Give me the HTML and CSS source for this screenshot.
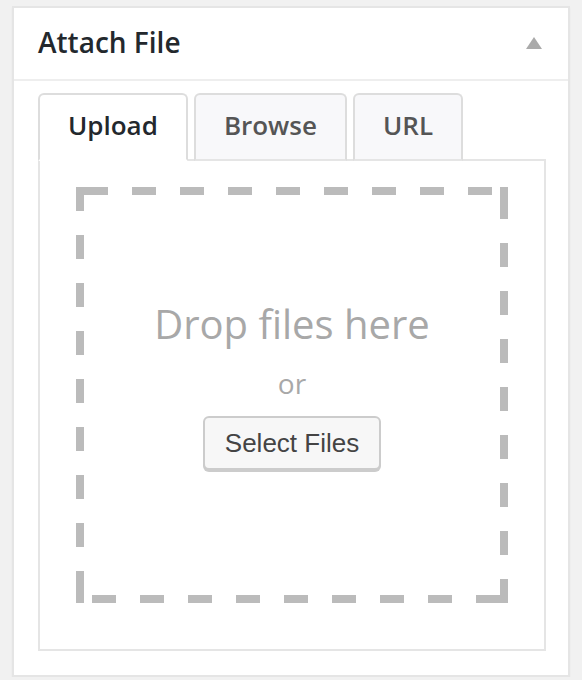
FILE: index.html
```html
<!DOCTYPE html>
<html lang="en">
<head>
  <meta charset="UTF-8">
  <meta name="viewport" content="width=device-width, initial-scale=1.0">
  <title>Attach File</title>
  <link rel="stylesheet" href="styles.css">
</head>
<body>
  <div class="postbox">
    <div class="postbox-header">
      <h2>Attach File</h2>
      <button class="toggle" aria-label="Toggle panel">
        <svg width="16" height="12" viewBox="0 0 16 12"><polygon points="8,0 16,12 0,12" fill="#aaa"/></svg>
      </button>
    </div>

    <div class="inside">
      <div class="tabs">
        <a class="tab active" href="#">Upload</a>
        <a class="tab" href="#">Browse</a>
        <a class="tab" href="#">URL</a>
      </div>

      <div class="tab-panel">
        <div class="drop-area">
          <p class="drop-info">Drop files here</p>
          <p class="drop-or">or</p>
          <button class="select-btn">Select Files</button>
        </div>
      </div>
    </div>
  </div>
</body>
</html>
```

FILE: styles.css
```css
body {
  margin: 0;
  padding: 6px 0 0 12px;
  background-color: #f1f1f1;
  font-family: 'Open Sans', sans-serif;
}
.postbox {
  width: 558px;
  box-sizing: border-box;
  background-color: #fff;
  border: 2px solid #e5e5e5;
  box-shadow: 0 2px 2px rgba(0,0,0,0.04);
}
.postbox-header {
  display: flex;
  align-items: center;
  justify-content: space-between;
  padding: 15px 26px 17px 24px;
  border-bottom: 2px solid #eee;
}
.postbox-header h2 {
  margin: 0;
  font-size: 28px;
  font-weight: 600;
  line-height: 39px;
  color: #23282d;
}
.toggle {
  display: flex;
  padding: 0;
  border: none;
  background: none;
  cursor: pointer;
}
.inside {
  padding: 12px 22px 24px 24px;
}
.tabs {
  display: flex;
  gap: 6px;
  margin-bottom: -2px;
}
.tab {
  position: relative;
  padding: 12px 28px 16px;
  border: 2px solid #ddd;
  border-bottom: 2px solid #e5e5e5;
  border-radius: 6px 6px 0 0;
  background-color: #f8f8fa;
  font-size: 26px;
  font-weight: 600;
  line-height: 36px;
  color: #555;
  text-decoration: none;
}
.tab.active {
  background-color: #fff;
  border-bottom-color: #fff;
  color: #23282d;
}
.tab-panel {
  border: 2px solid #e5e5e5;
  padding: 26px 36px 46px;
}
/* dashed frame: 8px thick, 24px dashes with 24px gaps, L-shaped corners */
.drop-area {
  height: 416px;
  box-sizing: border-box;
  padding-top: 113px;
  text-align: center;
  background:
    linear-gradient(#bbb, #bbb) right top / 8px 8px no-repeat,
    linear-gradient(#bbb, #bbb) left bottom / 8px 8px no-repeat,
    repeating-linear-gradient(90deg, transparent 0 8px, #bbb 8px 32px, transparent 32px 48px) left top / 100% 8px no-repeat,
    repeating-linear-gradient(90deg, transparent 0 16px, #bbb 16px 40px, transparent 40px 48px) left bottom / 100% 8px no-repeat,
    repeating-linear-gradient(180deg, #bbb 0 24px, transparent 24px 48px) left top / 8px 100% no-repeat,
    repeating-linear-gradient(180deg, transparent 0 8px, #bbb 8px 32px, transparent 32px 48px) right top / 8px 100% no-repeat;
}
.drop-info {
  margin: 0;
  font-size: 40px;
  line-height: 48px;
  color: #a8a8a8;
}
.drop-or {
  margin: 18px 0 0;
  font-size: 28px;
  line-height: 34px;
  color: #a8a8a8;
}
.select-btn {
  margin-top: 16px;
  height: 54px;
  padding: 0 20px;
  border: 2px solid #ccc;
  border-radius: 6px;
  background-color: #f7f7f7;
  box-shadow: 0 2px 0 #ccc;
  font-family: 'Liberation Sans', Arial, sans-serif;
  font-size: 26px;
  color: #444;
  cursor: pointer;
}
```
